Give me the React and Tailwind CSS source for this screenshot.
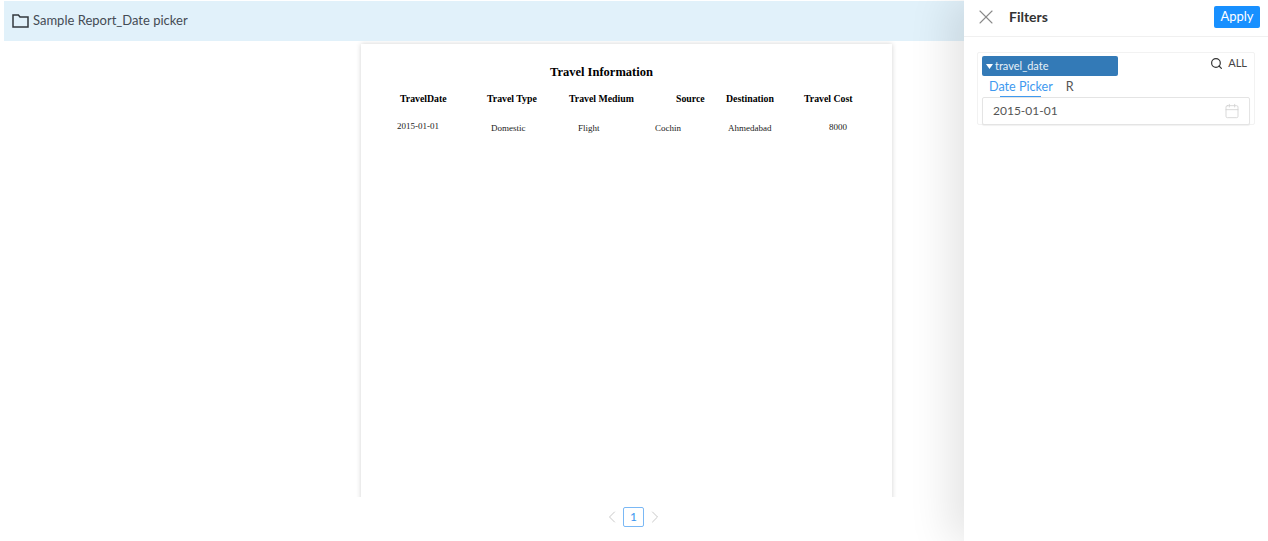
import React from 'react';
import { X, Search, Calendar, ChevronLeft, ChevronRight } from 'lucide-react';

const headers = [
    { label: 'TravelDate', cls: 'w-[87px]' },
    { label: 'Travel Type', cls: 'w-[82px]' },
    { label: 'Travel Medium', cls: 'w-[107px]' },
    { label: 'Source', cls: 'w-[50px]' },
    { label: 'Destination', cls: 'w-[78px]' },
    { label: 'Travel Cost', cls: '' },
];

const cells = [
    { label: '2015-01-01', cls: 'w-[94px]' },
    { label: 'Domestic', cls: 'w-[87px] mt-[2px]' },
    { label: 'Flight', cls: 'w-[77px] mt-[2px]' },
    { label: 'Cochin', cls: 'w-[73px] mt-[2px]' },
    { label: 'Ahmedabad', cls: 'w-[101px] mt-[2px]' },
    { label: '8000', cls: 'mt-[1px]' },
];

function App() {
    return (
        <div className="h-screen w-full overflow-hidden bg-white flex font-['Lato','Open_Sans',sans-serif]">
            {/* Report area */}
            <main className="flex-1 min-w-0 flex flex-col pl-1 pt-[1px]">
                <div className="h-10 shrink-0 bg-[#e1f1fa] flex items-center pl-2 pb-[1px] text-[#444b54]">
                    <svg width="17" height="14" viewBox="0 0 17 14" fill="none" stroke="#33383e" strokeWidth="1.5" className="shrink-0">
                        <path d="M1 13V1h5.4l1.6 2h8v10z" />
                    </svg>
                    <span className="ml-[4px] text-[13px] leading-none">Sample Report_Date picker</span>
                </div>

                <div className="h-[456px] shrink-0 overflow-hidden pt-[3px] pl-[357px]">
                    <div className="w-[531px] h-[480px] bg-white shadow-[0_0_5px_rgba(0,0,0,0.18)] text-black font-['Liberation_Serif',serif]">
                        <div className="pt-[21px] pl-[189px] text-[12.5px] font-bold leading-[14px]">Travel Information</div>
                        <div className="flex mt-[14px] pl-[39px] text-[9.8px] font-bold leading-[12px]">
                            {headers.map((h) => (
                                <div key={h.label} className={`${h.cls} shrink-0 whitespace-nowrap`}>{h.label}</div>
                            ))}
                        </div>
                        <div className="flex items-start mt-[16px] pl-[36px] text-[9px] leading-[10px] text-[#222]">
                            {cells.map((c) => (
                                <div key={c.label} className={`${c.cls} shrink-0 whitespace-nowrap`}>{c.label}</div>
                            ))}
                        </div>
                    </div>
                </div>

                <div className="flex items-center gap-[1px] pl-[598px] pt-[10px]">
                    <ChevronLeft className="w-5 h-5 text-[#c9c9c9]" strokeWidth={1.2} />
                    <div className="w-[21px] h-5 border border-[#7ab8f5] rounded-[2px] text-[#3c96f0] text-[12px] flex items-center justify-center">1</div>
                    <ChevronRight className="w-5 h-5 text-[#c9c9c9]" strokeWidth={1.2} />
                </div>
            </main>

            {/* Filters panel */}
            <aside className="w-[304px] shrink-0 bg-white flex flex-col shadow-[-14px_0_40px_rgba(0,0,0,0.11)] z-10">
                <div className="h-[37px] shrink-0 border-b border-[#f0f0f0] flex items-center pl-[10px] pr-[8px] pb-[2px]">
                    <X className="w-[24px] h-[24px] text-[#8a8a8a]" strokeWidth={1.1} />
                    <span className="ml-[11px] text-[14px] font-bold text-[#333] flex-1 mt-[-2px]">Filters</span>
                    <button className="w-[46px] h-[22px] bg-[#1890ff] text-white text-[13px] rounded-[2px] flex items-center justify-center">Apply</button>
                </div>

                <div className="mt-[15px] ml-[13px] w-[278px] h-[73px] border border-[#f2f2f2] rounded-[2px] px-[4px] pt-[3px]">
                    <div className="flex items-start justify-between">
                        <div className="w-[136px] h-[20px] bg-[#337ab7] rounded-[2px] text-[#e8f1f8] text-[11px] flex items-center pl-[4px]">
                            <svg width="7" height="5" viewBox="0 0 7 5" className="mr-[2px]"><path d="M0 0h7L3.5 5z" fill="#fff" /></svg>
                            travel_date
                        </div>
                        <div className="flex items-center text-[11px] text-[#444] pr-[3px] mt-[-1px]">
                            <Search className="w-[13px] h-[13px] text-[#333] mr-[5px]" strokeWidth={2.2} />
                            ALL
                        </div>
                    </div>
                    <div className="flex h-[21px] items-center text-[12.6px] pl-[7px] pt-[2px]">
                        <span className="relative text-[#3f9af0] h-full flex items-center">
                            Date Picker
                            <span className="absolute left-[11px] bottom-0 w-[41px] h-[1px] bg-[#3f9af0]" />
                        </span>
                        <span className="ml-[13px] text-[#555]">R</span>
                    </div>
                    <div className="h-[28px] border border-[#e4e4e4] rounded-[2px] shadow-[0_1px_1px_rgba(0,0,0,0.06)] flex items-center justify-between pl-[10px] pr-[9px] text-[12px] text-[#555]">
                        2015-01-01
                        <Calendar className="w-4 h-4 text-[#cfcfcf]" strokeWidth={1.2} />
                    </div>
                </div>
            </aside>
        </div>
    );
}

export default App;
